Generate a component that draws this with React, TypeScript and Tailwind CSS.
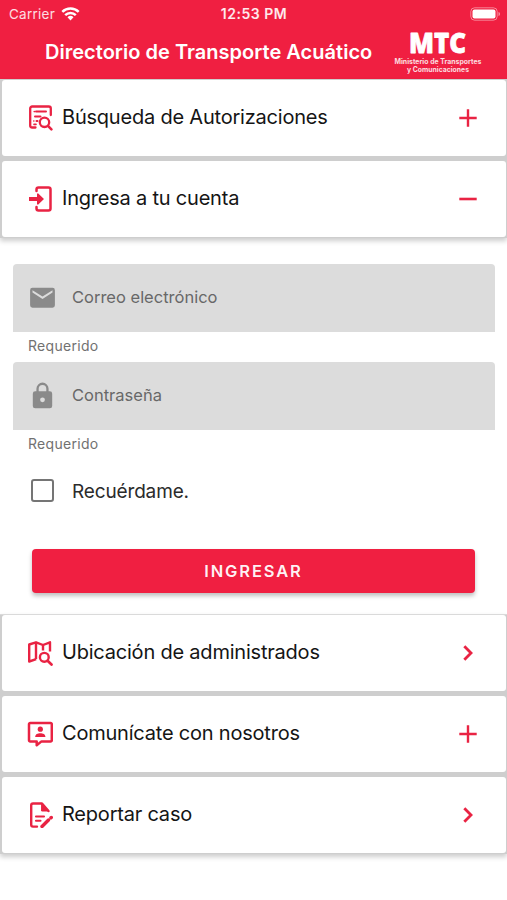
import { useState } from 'react'
import type { ReactNode } from 'react'

const SearchListIcon = () => (
  <svg className="w-[26px] h-[26px]" viewBox="0 0 26 26" fill="none" stroke="currentColor" strokeWidth="2.3" strokeLinecap="round">
    <path d="M8.500 22.500H5.200a2 2 0 0 1-2-2v-17a2 2 0 0 1 2-2h16.600a2 2 0 0 1 2 2V10" />
    <path d="M9 6.600h10M8 11.500h5.500M9.500 16h1" strokeWidth="2" />
    <path d="M7.200 6.600h.1M6.800 16h.1M7 19.400h2" strokeWidth="1.600" />
    <circle cx="17.500" cy="17.300" r="4.700" />
    <path d="M21 20.900l3.400 3.400" strokeWidth="2.600" />
  </svg>
)

const LoginIcon = () => (
  <svg className="w-[26px] h-[26px]" viewBox="0 0 26 26" fill="none" stroke="currentColor" strokeWidth="2.500" strokeLinecap="round">
    <path d="M9.500 5V3.500a2 2 0 0 1 2-2h10a2 2 0 0 1 2 2v19a2 2 0 0 1-2 2h-10a2 2 0 0 1-2-2V21" />
    <path d="M2 11h8V7.800l1-.6 6 5.800-6 5.800-1-.6V15H2z" fill="currentColor" stroke="none" />
  </svg>
)

const MapSearchIcon = () => (
  <svg className="w-[26px] h-[26px]" viewBox="0 0 26 26" fill="none" stroke="currentColor" strokeWidth="2.400" strokeLinejoin="round">
    <path d="M23 11.500V2.300l-7 2.700L9 2.300 2.200 4.500v17l7-2.300" />
    <path d="M9 2.300V19M16 5v5.500" />
    <circle cx="17.300" cy="17.300" r="4.400" />
    <path d="M20.600 20.800l3.900 3.700" strokeWidth="2.700" strokeLinecap="round" />
  </svg>
)

const ContactIcon = () => (
  <svg className="w-[26px] h-[26px]" viewBox="0 0 26 26" fill="none" stroke="currentColor" strokeWidth="2.500" strokeLinejoin="round">
    <path d="M3.200 2h20.400a1.200 1.200 0 0 1 1.200 1.200v16a1.200 1.200 0 0 1-1.200 1.200H14.500L9.700 24.300v-3.900H3.200A1.200 1.200 0 0 1 2 19.200v-16A1.200 1.200 0 0 1 3.200 2z" />
    <circle cx="13.300" cy="8.200" r="2.600" fill="currentColor" stroke="none" />
    <path d="M8.200 15.900c0-2.700 2.500-3.600 5.100-3.600s5.100.9 5.100 3.600z" fill="currentColor" stroke="none" />
  </svg>
)

const ReportIcon = () => (
  <svg className="w-[26px] h-[26px]" viewBox="0 0 26 26" fill="none" stroke="currentColor" strokeWidth="2.400" strokeLinejoin="round" strokeLinecap="round">
    <path d="M21.500 9L15 1.500H6a1.800 1.800 0 0 0-1.800 1.800v19.500a1.800 1.800 0 0 0 1.800 1.800h4" />
    <path d="M14.600 2v7h7z" fill="currentColor" strokeWidth="1" />
    <path d="M9 14.500h8M9 18.700h4.500" strokeWidth="2.100" />
    <path d="M15 24.500l6.500-6.500M24 15.800l.3-.3" strokeWidth="3.400" />
  </svg>
)

const PlusIcon = () => (
  <svg className="w-[18px] h-[18px]" viewBox="0 0 18 18" stroke="currentColor" strokeWidth="2.400">
    <path d="M.3 9h17.400M9 .3v17.400" />
  </svg>
)

const MinusIcon = () => (
  <svg className="w-[18px] h-[18px]" viewBox="0 0 18 18" stroke="currentColor" strokeWidth="2.600">
    <path d="M.3 9h17.400" />
  </svg>
)

const ChevronIcon = () => (
  <svg className="w-[18px] h-[18px]" viewBox="0 0 18 18" fill="none" stroke="currentColor" strokeWidth="2.800">
    <path d="M5.300 2.300L12 9l-6.700 6.700" />
  </svg>
)

type PanelProps = {
  icon: ReactNode
  label: string
  action: ReactNode
  onClick?: () => void
}

const PanelHeader = ({ icon, label, action, onClick }: PanelProps) => (
  <button onClick={onClick} className="flex items-center w-full h-[76px] pl-[25px] pr-[29px] bg-white rounded-[3px] text-left text-[#e92343]">
    <span className="mb-px">{icon}</span>
    <span className="flex-1 ml-[9px] mb-[3px] text-[20px] leading-6 tracking-[-0.21px] text-[#151515] whitespace-nowrap">{label}</span>
    <span>{action}</span>
  </button>
)

const Field = ({ icon, label }: { icon: ReactNode; label: string }) => (
  <div>
    <div className="flex items-center h-[68px] pl-4 pb-[2px] bg-[#dcdcdc] rounded-t-[4px] text-[#8a8a8a]">
      {icon}
      <span className="ml-[16px] text-[16.500px] leading-5 text-[#686868] whitespace-nowrap">{label}</span>
    </div>
    <div className="h-[30px] pl-[15px] pt-[4px] text-[14px] leading-5 text-[#717171] tracking-[0.3px]">Requerido</div>
  </div>
)

function App() {
  const [remember, setRemember] = useState(false)

  return (
    <div className="min-h-[900px] bg-white font-['Inter',sans-serif] overflow-hidden">
      {/* Header */}
      <header className="h-[79px] bg-[#f01f41] text-white">
        <div className="grid grid-cols-3 items-center h-[27px] pl-[9px] pr-[6px] text-[13.500px] leading-4">
          <div className="flex items-center gap-[6px] text-white/85">
            <span className="tracking-[0.25px]">Carrier</span>
            <svg className="w-[19px] h-[14px] text-white" viewBox="0 0 18 14" fill="none" stroke="currentColor" strokeWidth="2.500">
              <path d="M.8 4.900a11.800 11.800 0 0 1 16.400 0M3.700 8.100a7.600 7.600 0 0 1 10.600 0" />
              <path d="M9 13.500l-3-3.200a4.300 4.300 0 0 1 6 0z" fill="currentColor" stroke="none" />
            </svg>
          </div>
          <span className="-ml-[2px] text-center text-[14px] font-semibold tracking-[0.5px] whitespace-nowrap text-white/90">12:53 PM</span>
          <svg className="w-[31px] h-[14px] justify-self-end" viewBox="0 0 31 14">
            <rect x=".8" y=".8" width="26.400" height="12.400" rx="3.800" fill="none" stroke="white" strokeOpacity=".45" />
            <rect x="2.500" y="2.500" width="23" height="9" rx="2" fill="white" />
            <path d="M28.500 5v4c1-.2 1.500-1.200 1.500-2s-.5-1.800-1.500-2z" fill="white" fillOpacity=".5" />
          </svg>
        </div>
        <div className="flex justify-between pl-[45px] pr-[25px]">
          <h1 className="mt-[13px] text-[20px] leading-6 font-semibold tracking-[0.02px] whitespace-nowrap">Directorio de Transporte Acuático</h1>
          {/* Logo */}
          <svg className="w-[88px] h-[48px] overflow-visible" viewBox="0 0 88 48" fill="white" textAnchor="middle">
            <text className="font-['Open_Sans',sans-serif]" x="43.500" y="25.800" fontSize="28.500" fontWeight="800" textLength="57" lengthAdjust="spacingAndGlyphs" stroke="white" strokeWidth=".8" strokeLinejoin="round">MTC</text>
            <text x="44" y="36.800" fontSize="7.200" fontWeight="700" textLength="87" lengthAdjust="spacingAndGlyphs" fillOpacity=".85">Ministerio de Transportes</text>
            <text x="44" y="45" fontSize="7.200" fontWeight="700" textLength="62" lengthAdjust="spacingAndGlyphs" fillOpacity=".85">y Comunicaciones</text>
          </svg>
        </div>
      </header>

      <section className="flex flex-col gap-[5px] pt-px pb-px pl-[2px] pr-px bg-[#cecece] shadow-[0_3px_5px_rgba(0,0,0,0.2)]">
        <PanelHeader icon={<SearchListIcon />} label="Búsqueda de Autorizaciones" action={<PlusIcon />} />
        <PanelHeader icon={<LoginIcon />} label="Ingresa a tu cuenta" action={<MinusIcon />} />
      </section>

      {/* Login form */}
      <form className="h-[376px] pt-[26px] pl-[13px] pr-[12px]" onSubmit={(e) => e.preventDefault()}>
        <Field
          label="Correo electrónico"
          icon={
            <svg className="w-[27px] h-[27px]" viewBox="0 0 27 27" fill="currentColor">
              <path fillRule="evenodd" d="M3.500 3.800h20a2.400 2.400 0 0 1 2.400 2.400v15.100a2.400 2.400 0 0 1-2.400 2.400h-20a2.400 2.400 0 0 1-2.400-2.400V6.200a2.400 2.400 0 0 1 2.400-2.400zM3.500 6.200v2.400l10 6.400 10-6.400V6.200l-10 6.300z" />
            </svg>
          }
        />
        <Field
          label="Contraseña"
          icon={
            <svg className="w-[27px] h-[27px]" viewBox="0 0 27 27" fill="currentColor">
              <path fillRule="evenodd" d="M6.200 9.300h1.200V6.700a6.100 6.100 0 0 1 12.200 0v2.600h1.200a2.400 2.400 0 0 1 2.400 2.400v12.200a2.400 2.400 0 0 1-2.400 2.400H6.200a2.400 2.400 0 0 1-2.400-2.400V11.700a2.400 2.400 0 0 1 2.400-2.400zM9.700 9.300h7.600V6.700a3.800 3.800 0 0 0-7.600 0zM13.500 15.400a2.400 2.400 0 1 0 0 4.800 2.400 2.400 0 0 0 0-4.800z" />
            </svg>
          }
        />
        <label className="flex items-center h-[60px] pl-[18px]">
          <input
            type="checkbox"
            checked={remember}
            onChange={() => setRemember(!remember)}
            className="appearance-none w-[23px] h-[23px] border-2 border-[#757575] rounded-[3px] checked:bg-[#f01f41]"
          />
          <span className="ml-[18px] mt-[3px] text-[19px] leading-6 tracking-[-0.15px] text-[#2b2b2b]">Recuérdame.</span>
        </label>
        <button className="block w-[443px] h-[44px] mt-[29px] ml-[19px] rounded-[4px] bg-[#f01f41] text-white/95 text-[16.500px] leading-5 font-semibold tracking-[1.850px] shadow-[0_3px_4px_rgba(0,0,0,0.25)]">
          INGRESAR
        </button>
      </form>

      <section className="flex flex-col gap-[5px] pb-px pl-[2px] pr-px border-t border-[#dadada] bg-[#cecece] shadow-[0_3px_5px_rgba(0,0,0,0.2)]">
        <PanelHeader icon={<MapSearchIcon />} label="Ubicación de administrados" action={<ChevronIcon />} />
        <PanelHeader icon={<ContactIcon />} label="Comunícate con nosotros" action={<PlusIcon />} />
        <PanelHeader icon={<ReportIcon />} label="Reportar caso" action={<ChevronIcon />} />
      </section>
    </div>
  )
}

export default App
